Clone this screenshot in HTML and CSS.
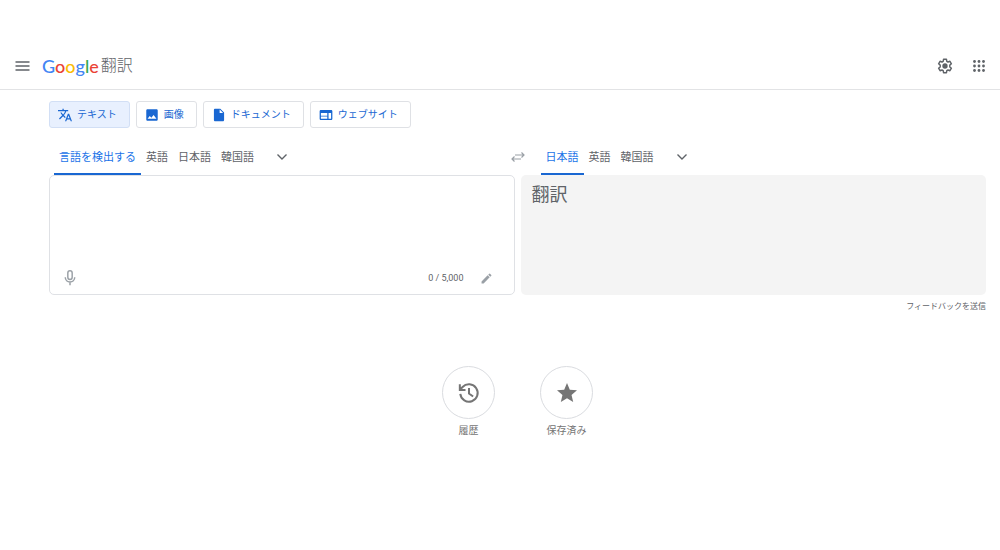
FILE: index.html
```html
<!DOCTYPE html>
<html lang="ja">
<head>
<meta charset="utf-8">
<meta name="viewport" content="width=device-width, initial-scale=1">
<title>Google 翻訳</title>
<link rel="stylesheet" href="styles.css">
</head>
<body>
<header class="header">
  <button class="icon-button" type="button" aria-label="メインメニュー">
    <svg class="icon-menu" viewBox="0 0 14 10"><path d="M0 1h14M0 5h14M0 9h14" stroke="currentColor" stroke-width="1.6"/></svg>
  </button>
  <a class="logo" href="#"><span class="logo-name"><span class="blue">G</span><span class="red">o</span><span class="yellow">o</span><span class="blue">g</span><span class="green">l</span><span class="red">e</span></span><span class="logo-product">翻訳</span></a>
  <div class="header-actions">
    <button class="icon-button" type="button" aria-label="設定">
      <svg class="icon-gear" viewBox="0 0 24 24"><path d="M9.8 2h4.400l.5 3 1.800 1 2.900-1.100 2.200 3.800-2.400 1.900v2.800l2.400 1.900-2.200 3.800-2.900-1.100-1.800 1-.5 3H9.800l-.5-3-1.800-1-2.900 1.100-2.200-3.800 2.400-1.900v-2.800L2.400 8.700l2.200-3.800L7.500 6l1.800-1z" fill="none" stroke="currentColor" stroke-width="2.200" stroke-linejoin="round"/><circle cx="12" cy="12" r="4" fill="currentColor"/></svg>
    </button>
    <button class="icon-button" type="button" aria-label="Google アプリ">
      <svg class="icon-apps" viewBox="0 0 12 12" fill="currentColor"><circle cx="1.500" cy="1.500" r="1.400"/><circle cx="6" cy="1.500" r="1.400"/><circle cx="10.500" cy="1.500" r="1.400"/><circle cx="1.500" cy="6" r="1.400"/><circle cx="6" cy="6" r="1.400"/><circle cx="10.500" cy="6" r="1.400"/><circle cx="1.500" cy="10.500" r="1.400"/><circle cx="6" cy="10.500" r="1.400"/><circle cx="10.500" cy="10.500" r="1.400"/></svg>
    </button>
  </div>
</header>
<main class="main">
  <nav class="modes" aria-label="翻訳の種類">
    <button class="mode mode-active" type="button">
      <svg class="mode-icon" viewBox="1 1 22 22" fill="currentColor"><path d="M12.870 15.070l-2.540-2.510.03-.03A17.520 17.520 0 0 0 14.070 6H17V4h-7V2H8v2H1v2h11.170C11.500 7.920 10.440 9.750 9 11.350 8.070 10.320 7.300 9.190 6.690 8h-2c.73 1.630 1.730 3.170 2.980 4.560l-5.090 5.020L4 19l5-5 3.110 3.110.76-2.040zM18.500 10h-2L12 22h2l1.120-3h4.750L21 22h2l-4.500-12zm-2.620 7l1.620-4.330L19.120 17h-3.240z"/></svg>
      テキスト
    </button>
    <button class="mode" type="button">
      <svg class="mode-icon" viewBox="1 1 22 22" fill="currentColor"><path d="M21 19V5c0-1.100-.9-2-2-2H5c-1.100 0-2 .9-2 2v14c0 1.100.9 2 2 2h14c1.100 0 2-.9 2-2zM8.500 13.500l2.500 3.010L14.500 12l4.500 6H5l3.500-4.500z"/></svg>
      画像
    </button>
    <button class="mode" type="button">
      <svg class="mode-icon" viewBox="1 1 22 22" fill="currentColor"><path d="M6 2c-1.100 0-2 .9-2 2v16c0 1.100.9 2 2 2h12c1.100 0 2-.9 2-2V8l-6-6H6zm7 7V3.500L18.500 9H13z"/></svg>
      ドキュメント
    </button>
    <button class="mode" type="button">
      <svg class="mode-icon" viewBox="1 1 22 22" fill="currentColor"><path d="M20 4H4c-1.100 0-2 .9-2 2v12c0 1.100.9 2 2 2h16c1.100 0 2-.9 2-2V6c0-1.100-.9-2-2-2zm-6 14H4v-3.500h10V18zm0-5H4V9h10v4zm6 5h-4V9h4v9z"/></svg>
      ウェブサイト
    </button>
  </nav>
  <div class="translator">
    <section class="side">
      <div class="languages">
        <button class="language language-active" type="button">言語を検出する</button>
        <button class="language" type="button">英語</button>
        <button class="language" type="button">日本語</button>
        <button class="language" type="button">韓国語</button>
        <button class="more" type="button" aria-label="その他の原文の言語"><svg class="icon-chevron" viewBox="0 0 10 6"><path d="M.5.5L5 5 9.500.5" fill="none" stroke="currentColor" stroke-width="1.400"/></svg></button>
      </div>
      <div class="panel source">
        <textarea class="source-text" aria-label="原文" rows="3"></textarea>
        <div class="source-tools">
          <button class="icon-button" type="button" aria-label="音声入力"><svg class="icon-tool" viewBox="4 1 16 22" fill="none" stroke="currentColor" stroke-width="2"><rect x="9" y="2" width="6" height="12" rx="3"/><path d="M5.500 11c0 4 3 6.500 6.500 6.500s6.500-2.500 6.500-6.500M12 17.500V22"/></svg></button>
          <span class="count">0 / 5,000</span>
          <button class="icon-button" type="button" aria-label="手書き入力"><svg class="icon-pencil" viewBox="2 2 20 20" fill="currentColor"><path d="M3 17.250V21h3.750L17.810 9.940l-3.750-3.750L3 17.250zM20.710 7.040a1 1 0 0 0 0-1.410l-2.340-2.340a1 1 0 0 0-1.410 0l-1.830 1.830 3.750 3.750 1.830-1.830z"/></svg></button>
        </div>
      </div>
    </section>
    <section class="side">
      <div class="languages">
        <button class="swap" type="button" aria-label="言語を入れ替える"><svg class="icon-swap" viewBox="0 0 14 10" fill="none" stroke="currentColor" stroke-width="1.200"><path d="M4 3h9M10.500.5L13 3l-2.500 2.500M10 7H1M3.500 4.500L1 7l2.500 2.500"/></svg></button>
        <button class="language language-active" type="button">日本語</button>
        <button class="language" type="button">英語</button>
        <button class="language" type="button">韓国語</button>
        <button class="more" type="button" aria-label="その他の訳文の言語"><svg class="icon-chevron" viewBox="0 0 10 6"><path d="M.5.5L5 5 9.500.5" fill="none" stroke="currentColor" stroke-width="1.400"/></svg></button>
      </div>
      <div class="panel result">翻訳</div>
    </section>
  </div>
  <a class="feedback" href="#">フィードバックを送信</a>
</main>
<nav class="shortcuts" aria-label="保存した翻訳">
  <a class="shortcut" href="#">
    <span class="shortcut-circle"><svg class="shortcut-icon" viewBox="0 0 24 24" fill="none" stroke="currentColor" stroke-width="2.200"><path d="M2.500 13a9.500 9.500 0 1 0 2.500-7.500L2.500 8M2 2.500v6.200h6.200M12 6.500v6l4.500 3.300"/></svg></span>
    履歴
  </a>
  <a class="shortcut" href="#">
    <span class="shortcut-circle"><svg class="shortcut-icon" viewBox="1 1 22 22" fill="currentColor"><path d="M12 17.270L18.180 21l-1.640-7.030L22 9.240l-7.190-.61L12 2 9.190 8.630 2 9.240l5.460 4.730L5.820 21z"/></svg></span>
    保存済み
  </a>
</nav>
</body>
</html>
```
FILE: styles.css
```css
* { box-sizing: border-box; }

body {
  margin: 0;
  padding-top: 42px;
  background: #fff;
  color: #5f6368;
  font-family: Roboto, "Noto Sans CJK JP", sans-serif;
  font-size: 11px;
  line-height: 16px;
}

button {
  margin: 0;
  padding: 0;
  border: 0;
  background: none;
  color: inherit;
  font: inherit;
  cursor: pointer;
}

a { color: inherit; text-decoration: none; }
svg { display: block; flex: none; }

.header {
  display: flex;
  align-items: center;
  height: 48px;
  padding: 0 15px;
  border-bottom: 1px solid #e2e3e5;
}

.icon-button { display: flex; align-items: center; justify-content: center; }
.icon-menu { width: 15px; height: 10px; }
.icon-gear { width: 16px; height: 16px; }
.icon-apps { width: 12px; height: 12px; }

.logo { display: flex; align-items: center; gap: 2px; margin-left: 12px; line-height: 24px; }
.logo-name { font-family: Lato, sans-serif; font-size: 18px; font-weight: 500; }
.logo-product { font-size: 16px; font-weight: 300; }
.blue { color: #4285f4; }
.red { color: #ea4335; }
.yellow { color: #fbbc05; }
.green { color: #34a853; }

.header-actions { display: flex; align-items: center; gap: 20px; margin-left: auto; }

.main { padding: 11px 14px 0 49px; }

.modes { display: flex; gap: 6px; }

.mode {
  display: flex;
  align-items: center;
  gap: 5px;
  height: 27px;
  padding: 0 12px 0 8px;
  border: 1px solid #dfe1e5;
  border-radius: 3px;
  color: #1967d2;
  font-size: 10px;
}

.mode-active { border-color: #d2dff5; background: #e8f0fe; }
.mode-icon { width: 14px; height: 14px; }

.translator { display: grid; grid-template-columns: 1fr 1fr; gap: 6px; margin-top: 12px; }
.side { display: flex; flex-direction: column; min-width: 0; }

.languages { display: flex; height: 35px; padding-left: 5px; }
.language { padding: 2px 5px 0; border-bottom: 2px solid transparent; }
.language-active { border-color: #1967d2; color: #1a73e8; }
.more { display: flex; align-items: center; margin-left: 18px; padding-bottom: 2px; }
.icon-chevron { width: 10px; height: 6px; }
.swap {
  display: flex;
  align-items: center;
  margin: 0 16px 0 -15px;
  padding-bottom: 2px;
  color: #9aa0a6;
}
.icon-swap { width: 14px; height: 10px; }

.panel { min-height: 120px; border-radius: 5px; }

.source {
  display: flex;
  flex-direction: column;
  border: 1px solid #dfe1e5;
}

.source-text {
  flex: 1;
  margin: 0;
  padding: 8px 10px;
  border: 0;
  outline: 0;
  background: none;
  resize: none;
  color: #3c4043;
  font: inherit;
  font-size: 18px;
  line-height: 24px;
}

.source-tools {
  display: flex;
  align-items: center;
  padding: 0 22px 8px 14px;
  color: #9aa0a6;
}

.icon-tool { width: 12px; height: 16px; }
.icon-pencil { width: 11px; height: 11px; }
.count { margin: 0 17px 0 auto; color: #5f6368; font-size: 9px; }

.result { padding: 8px 11px; background: #f4f4f4; font-size: 18px; line-height: 24px; }

.feedback { display: block; width: fit-content; margin: 4px 0 0 auto; font-size: 8px; }

.shortcuts { display: flex; justify-content: center; gap: 45px; padding: 51px 0 24px 35px; }

.shortcut {
  display: flex;
  flex-direction: column;
  align-items: center;
  gap: 4px;
  color: #757575;
  font-size: 10px;
}

.shortcut-circle {
  display: flex;
  align-items: center;
  justify-content: center;
  width: 53px;
  height: 53px;
  border: 1px solid #dadce0;
  border-radius: 50%;
}

.shortcut-icon { width: 22px; height: 22px; }
```
